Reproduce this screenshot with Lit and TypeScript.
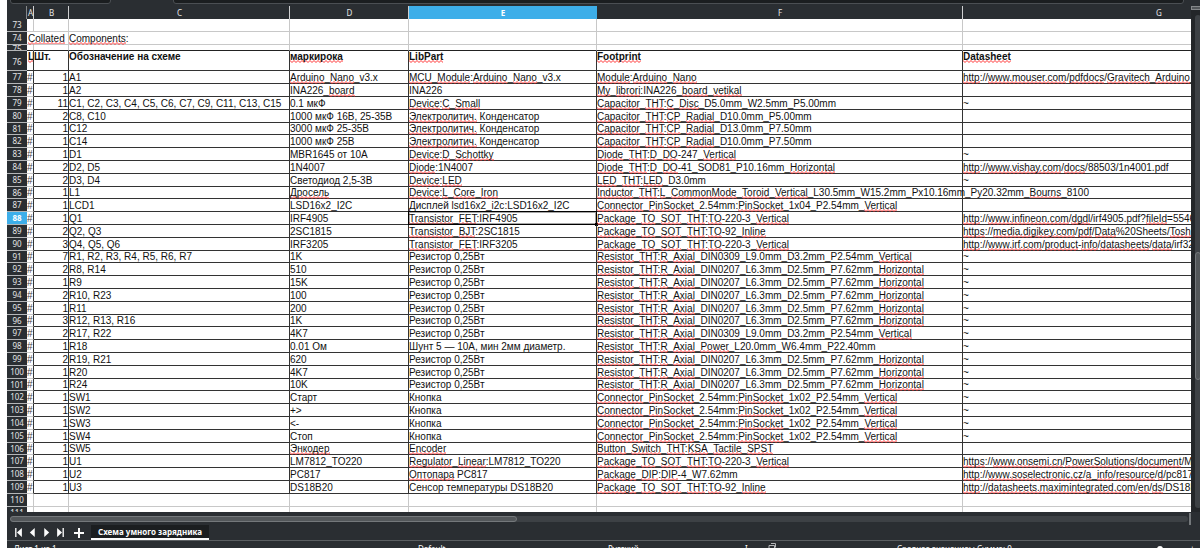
import { LitElement, html, css, nothing } from "lit";
import { customElement, property, state } from "lit/decorators.js";

type Row = { n: number; kind: string; cells: string[] };

const COLUMNS = ["A", "B", "C", "D", "E", "F", "G"];
const R = "Резистор 0,25Вт";
const VERT = "Resistor_THT:R_Axial_DIN0309_L9.0mm_D3.2mm_P2.54mm_Vertical";
const HORZ = "Resistor_THT:R_Axial_DIN0207_L6.3mm_D2.5mm_P7.62mm_Horizontal";
const SOCKET = "Connector_PinSocket_2.54mm:PinSocket_1x02_P2.54mm_Vertical";

const PARTS: string[][] = [
  ["1", "A1", "Arduino_Nano_v3.x", "MCU_Module:Arduino_Nano_v3.x", "Module:Arduino_Nano", "http://www.mouser.com/pdfdocs/Gravitech_Arduino_Nano3_0.pdf"],
  ["1", "A2", "INA226_board", "INA226", "My_librori:INA226_board_vetikal", ""],
  ["11", "C1, C2, C3, C4, C5, C6, C7, C9, C11, C13, C15", "0.1 мкФ", "Device:C_Small", "Capacitor_THT:C_Disc_D5.0mm_W2.5mm_P5.00mm", "~"],
  ["2", "C8, C10", "1000 мкФ 16В, 25-35В", "Электролитич. Конденсатор", "Capacitor_THT:CP_Radial_D10.0mm_P5.00mm", ""],
  ["1", "C12", "3000 мкФ 25-35В", "Электролитич. Конденсатор", "Capacitor_THT:CP_Radial_D13.0mm_P7.50mm", ""],
  ["1", "C14", "1000 мкФ 25В", "Электролитич. Конденсатор", "Capacitor_THT:CP_Radial_D10.0mm_P7.50mm", ""],
  ["1", "D1", "MBR1645 от 10А", "Device:D_Schottky", "Diode_THT:D_DO-247_Vertical", "~"],
  ["2", "D2, D5", "1N4007", "Diode:1N4007", "Diode_THT:D_DO-41_SOD81_P10.16mm_Horizontal", "http://www.vishay.com/docs/88503/1n4001.pdf"],
  ["2", "D3, D4", "Светодиод 2,5-3В", "Device:LED", "LED_THT:LED_D3.0mm", "~"],
  ["1", "L1", "Дросель", "Device:L_Core_Iron", "Inductor_THT:L_CommonMode_Toroid_Vertical_L30.5mm_W15.2mm_Px10.16mm_Py20.32mm_Bourns_8100", ""],
  ["1", "LCD1", "LSD16x2_I2C", "Дисплей lsd16x2_i2c:LSD16x2_I2C", "Connector_PinSocket_2.54mm:PinSocket_1x04_P2.54mm_Vertical", ""],
  ["1", "Q1", "IRF4905", "Transistor_FET:IRF4905", "Package_TO_SOT_THT:TO-220-3_Vertical", "http://www.infineon.com/dgdl/irf4905.pdf?fileId=5546d462533600a4"],
  ["2", "Q2, Q3", "2SC1815", "Transistor_BJT:2SC1815", "Package_TO_SOT_THT:TO-92_Inline", "https://media.digikey.com/pdf/Data%20Sheets/Toshiba%20PDFs/2SC1815.pdf"],
  ["3", "Q4, Q5, Q6", "IRF3205", "Transistor_FET:IRF3205", "Package_TO_SOT_THT:TO-220-3_Vertical", "http://www.irf.com/product-info/datasheets/data/irf3205.pdf"],
  ["7", "R1, R2, R3, R4, R5, R6, R7", "1K", R, VERT, "~"],
  ["2", "R8, R14", "510", R, HORZ, "~"],
  ["1", "R9", "15K", R, HORZ, "~"],
  ["2", "R10, R23", "100", R, HORZ, "~"],
  ["1", "R11", "200", R, HORZ, "~"],
  ["3", "R12, R13, R16", "1K", R, HORZ, "~"],
  ["2", "R17, R22", "4K7", R, VERT, "~"],
  ["1", "R18", "0.01 Ом", "Шунт 5 — 10А, мин 2мм диаметр.", "Resistor_THT:R_Axial_Power_L20.0mm_W6.4mm_P22.40mm", "~"],
  ["2", "R19, R21", "620", R, HORZ, "~"],
  ["1", "R20", "4K7", R, HORZ, "~"],
  ["1", "R24", "10K", R, HORZ, "~"],
  ["1", "SW1", "Старт", "Кнопка", SOCKET, "~"],
  ["1", "SW2", "+>", "Кнопка", SOCKET, "~"],
  ["1", "SW3", "<-", "Кнопка", SOCKET, "~"],
  ["1", "SW4", "Стоп", "Кнопка", SOCKET, "~"],
  ["1", "SW5", "Энкодер", "Encoder", "Button_Switch_THT:KSA_Tactile_SPST", ""],
  ["1", "U1", "LM7812_TO220", "Regulator_Linear:LM7812_TO220", "Package_TO_SOT_THT:TO-220-3_Vertical", "https://www.onsemi.cn/PowerSolutions/document/MC7800-D.PDF"],
  ["1", "U2", "PC817", "Оптопара PC817", "Package_DIP:DIP-4_W7.62mm", "http://www.soselectronic.cz/a_info/resource/d/pc817.pdf"],
  ["1", "U3", "DS18B20", "Сенсор температуры DS18B20", "Package_TO_SOT_THT:TO-92_Inline", "http://datasheets.maximintegrated.com/en/ds/DS18B20.pdf"],
];

const blank = () => ["", "", "", "", "", "", ""];

const ROWS: Row[] = [
  { n: 73, kind: "plain", cells: blank() },
  { n: 74, kind: "plain", cells: ["Collated", "", "Components:", "", "", "", ""] },
  { n: 75, kind: "plain thin", cells: blank() },
  { n: 76, kind: "title", cells: ["Ц", "Шт.", "Обозначение на схеме", "маркирока", "LibPart", "Footprint", "Datasheet"] },
  ...PARTS.map((p, i) => ({
    n: 77 + i,
    kind: (77 + i) % 5 === 1 ? "part short" : "part",
    cells: ["#", ...p],
  })),
  { n: 110, kind: "plain", cells: blank() },
  { n: 111, kind: "plain", cells: blank() },
];

const UNKNOWN = new Set(["Электролитич.", "Дросель", "Энкодер", "Оптопара", "маркирока", "Ц"]);

/* Latin words without digits and words missing from the dictionary get a red wave. */
function misspelt(token: string) {
  return UNKNOWN.has(token) || (/[A-Za-z]/.test(token) && !/\d/.test(token));
}

function spell(text: string) {
  return text
    .split(/([^A-Za-zА-Яа-я0-9.]+)/)
    .filter((t) => t !== "")
    .map((t) => (misspelt(t) ? html`<span class="wave">${t}</span>` : t));
}

@customElement("sheet-grid")
export class SheetGrid extends LitElement {
  @state() private row = 88;
  @state() private column = 4;

  static styles = css`
    :host {
      display: block;
      overflow: hidden;
      background: #fff;
    }
    .grid {
      width: 1348px;
      table-layout: fixed;
      border-collapse: separate;
      border-spacing: 0;
      font: 10px/13px "Liberation Sans", Arial, sans-serif;
      color: #111;
    }
    .w-n { width: 20px; }
    .w-A { width: 7px; }
    .w-B { width: 35px; }
    .w-C { width: 221px; }
    .w-D { width: 119px; }
    .w-E { width: 188px; }
    .w-F { width: 366px; }
    .w-G { width: 392px; }
    th, td { padding: 0; }
    .head, .num {
      background: #2a2e32;
      color: #e4e5e6;
      font: 8px/12px "Noto Sans", sans-serif;
      text-align: center;
    }
    .head {
      height: 13px;
      line-height: 13px;
      box-shadow: inset -1px 0 #d0d1d2;
    }
    .corner { box-shadow: inset -1px 0 #85888a; }
    .head.on, .num.on {
      background: #3daee9;
      color: #fff;
      font-weight: 700;
      box-shadow: none;
    }
    .num { border-bottom: 1px solid #b4b6b8; }
    .box {
      height: 12px;
      white-space: nowrap;
    }
    .cell {
      position: relative;
      vertical-align: top;
      border-right: 1px solid #333;
      border-bottom: 1px solid #333;
    }
    .plain .cell { border-color: #c8c8c8; }
    .plain .cell.open { border-right-color: transparent; }
    .thin .cell { border-bottom-color: #222; }
    .thin .box, .thin .num-box { height: 5px; line-height: 7px; overflow: hidden; }
    .short .box, .short .num-box { height: 11px; line-height: 12px; }
    .title .box { height: 19px; line-height: 11px; font-weight: 700; }
    .title .num-box { height: 19px; line-height: 21px; }
    .num-box { height: 12px; }
    .c-A .box { padding-left: 1px; }
    .title .c-A .box, .part .c-A .box { overflow: hidden; }
    .part .c-A { border-bottom-color: #c8c8c8; }
    .part .c-A .box { color: #444; padding-left: 0; }
    .part .c-B .box { text-align: right; }
    .wave {
      padding-bottom: 1px;
      background: url("data:image/svg+xml,%3Csvg xmlns='http://www.w3.org/2000/svg' width='4' height='3'%3E%3Cpath d='M-1 1.5L0 0.5L2 2.5L4 0.5L5 1.5' fill='none' stroke='%23ff1a1a' stroke-width='0.9'/%3E%3C/svg%3E") left bottom repeat-x;
    }
    .cursor {
      position: absolute;
      inset: -1px -1px -1px -1px;
      border: 1px solid #000;
      outline: 1px solid rgba(0, 0, 0, 0.35);
      outline-offset: -2px;
    }
    .cursor::after {
      content: "";
      position: absolute;
      right: -2px;
      bottom: -2px;
      width: 3px;
      height: 3px;
      background: #000;
    }
  `;

  private cell(r: Row, c: number) {
    const text = r.cells[c];
    const open = r.n === 74 && c === 0 ? " open" : "";
    const at = r.n === this.row && c === this.column;
    return html`<td
      class="cell c-${COLUMNS[c]}${open}"
      @click=${() => {
        this.row = r.n;
        this.column = c;
      }}
    ><div class="box">${text ? spell(text) : nothing}</div>${at ? html`<div class="cursor"></div>` : nothing}</td>`;
  }

  render() {
    return html`
      <table class="grid">
        <colgroup>
          <col class="w-n" />
          ${COLUMNS.map((c) => html`<col class="w-${c}" />`)}
        </colgroup>
        <thead>
          <tr>
            <td class="head corner"></td>
            ${COLUMNS.map((c, i) => html`<th scope="col" class="head ${i === this.column ? "on" : ""}">${c}</th>`)}
          </tr>
        </thead>
        <tbody>
          ${ROWS.map(
            (r) => html`<tr class=${r.kind}>
              <th scope="row" class="num ${r.n === this.row ? "on" : ""}"><div class="num-box">${r.n}</div></th>
              ${r.cells.map((_, c) => this.cell(r, c))}
            </tr>`
          )}
        </tbody>
      </table>
    `;
  }
}

@customElement("scroll-track")
export class ScrollTrack extends LitElement {
  @property({ type: Boolean, reflect: true }) vertical = false;
  @property({ type: Number }) start = 0;
  @property({ type: Number }) size = 50;

  static styles = css`
    :host {
      display: block;
      box-sizing: border-box;
      height: 6px;
      border-radius: 3px;
      background: #3d4145;
    }
    :host([vertical]) {
      height: auto;
      width: 6px;
    }
    .thumb {
      box-sizing: border-box;
      height: 100%;
      border: 1px solid #74787b;
      border-radius: 3px;
      background: #53575a;
    }
  `;

  render() {
    const s = this.vertical
      ? `height:${this.size}%;position:relative;top:${this.start}%`
      : `width:${this.size}%;margin-left:${this.start}%`;
    return html`<div class="thumb" style=${s}></div>`;
  }
}

@customElement("app-root")
export class AppRoot extends LitElement {
  static styles = css`
    :host {
      display: flex;
      flex-direction: column;
      height: 100vh;
      box-sizing: border-box;
      padding-left: 7px;
      overflow: hidden;
      background: #fff;
      font: 8px/12px "Noto Sans", sans-serif;
      color: #fcfcfc;
    }
    .formula {
      display: flex;
      align-items: flex-end;
      gap: 62px;
      height: 4px;
      overflow: hidden;
      padding: 0 16px 2px 3px;
      background: #2a2e32;
    }
    .field {
      box-sizing: border-box;
      height: 24px;
      border: 1px solid #4b4f53;
      border-radius: 3px;
      background: #1b1e20;
      color: #fcfcfc;
    }
    .name { width: 101px; }
    .content { flex: 1; min-width: 0; }
    .middle {
      display: flex;
      flex: 1;
      min-height: 0;
      background: #2a2e32;
    }
    .grid { flex: 1; min-width: 0; }
    .side {
      display: flex;
      flex-direction: column;
      width: 9px;
      gap: 5px;
      padding-bottom: 4px;
      box-sizing: border-box;
      background: #232629;
    }
    .split {
      height: 2px;
      border: 1px solid #85888a;
      border-right: 0;
      background: #53575a;
    }
    .side .bar { flex: 1; margin-left: 4px; }
    .across {
      display: flex;
      align-items: center;
      height: 13px;
      padding: 0 9px 0 3px;
      gap: 1px;
      background: #2a2e32;
    }
    .across .bar { flex: 1; }
    .grip { width: 2px; height: 12px; background: #74787b; }
    .tabs {
      display: flex;
      align-items: stretch;
      height: 15px;
      padding-left: 4px;
      background: #2a2e32;
      border-bottom: 1px solid #5a5e61;
    }
    .tool, .tab {
      border: 0;
      padding: 0;
      margin: 0;
      background: none;
      color: inherit;
      font: inherit;
    }
    .tool { width: 14px; }
    .tool.add { width: 24px; }
    .icon { display: block; margin: 0 auto; fill: #fcfcfc; }
    .tab {
      padding: 0 7px;
      background: #1b1e20;
      border-bottom: 2px solid #fcfcfc;
      font-weight: 700;
    }
    .status {
      display: grid;
      grid-template-columns: 404fr 190fr 137fr 23fr 129fr 259fr 34fr 10fr;
      height: 7px;
      overflow: hidden;
      padding-left: 7px;
      background: #2a2e32;
      white-space: nowrap;
    }
    .status > * { margin-top: 2px; }
  `;

  private nav(label: string, d: string) {
    return html`<button class="tool" aria-label=${label}>
      <svg class="icon" width="9" height="9" viewBox="0 0 8 8"><path d=${d} /></svg>
    </button>`;
  }

  render() {
    return html`
      <div class="formula">
        <input class="field name" aria-label="Поле имени" />
        <input class="field content" aria-label="Строка ввода" />
      </div>
      <div class="middle">
        <sheet-grid class="grid"></sheet-grid>
        <div class="side">
          <div class="split"></div>
          <scroll-track class="bar" vertical .start=${48} .size=${26}></scroll-track>
        </div>
      </div>
      <div class="across">
        <scroll-track class="bar" .start=${0} .size=${43}></scroll-track>
        <div class="grip"></div>
      </div>
      <div class="tabs">
        ${this.nav("Первый лист", "M1 0h1.2v8H1zM7 0v8L2.6 4z")}
        ${this.nav("Предыдущий лист", "M6 0v8L1.6 4z")}
        ${this.nav("Следующий лист", "M2 0v8l4.4-4z")}
        ${this.nav("Последний лист", "M5.8 0H7v8H5.8zM1 0v8l4.4-4z")}
        <button class="tool add" aria-label="Добавить лист">
          <svg class="icon" width="10" height="10" viewBox="0 0 10 10"><path d="M4 0h2v4h4v2H6v4H4V6H0V4h4z" /></svg>
        </button>
        <button class="tab">Схема умного зарядника</button>
      </div>
      <div class="status">
        <span>Лист 1 из 1</span>
        <span>Default</span>
        <span>Русский</span>
        <span>I</span>
        <svg width="8" height="8" viewBox="0 0 8 8"><path d="M1 2.5h5.5V8H1zM3 .5h4.5v4" fill="none" stroke="#b4b6b8" /></svg>
        <span>Среднее значение: ; Сумма: 0</span>
        <svg width="8" height="8" viewBox="0 0 8 8"><circle cx="4" cy="6" r="3" fill="#fcfcfc" /></svg>
        <span>+</span>
      </div>
    `;
  }
}
